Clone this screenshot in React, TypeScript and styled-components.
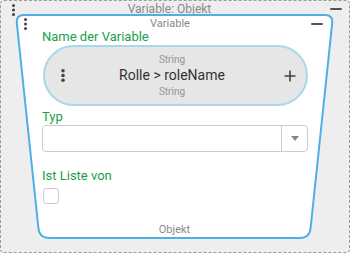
import React from "react";
import styled, { createGlobalStyle } from "styled-components";

const Global = createGlobalStyle`
  html, body { margin: 0; padding: 0; background: #ffffff; }
  body { font-family: Roboto, "Liberation Sans", sans-serif; }
  * { box-sizing: border-box; }
`;

const Outer = styled.div`
  width: 350px;
  height: 253px;
  border: 1px dashed #9c9c9c;
  border-radius: 4px;
  background: #eeeeee;
  display: flex;
  flex-direction: column;
`;

const OuterHeader = styled.div`
  height: 12px;
  display: flex;
  align-items: flex-start;
  padding: 0 7px 0 11px;
`;

const Title = styled.div<{ $size: number; $shift: number }>`
  flex: 1;
  text-align: center;
  font-size: ${(p) => p.$size}px;
  line-height: ${(p) => p.$size + 2}px;
  color: #8a8a8a;
  padding-left: ${(p) => (p.$shift > 0 ? p.$shift : 0)}px;
  padding-right: ${(p) => (p.$shift < 0 ? -p.$shift : 0)}px;
  white-space: nowrap;
`;

const OuterTitle = styled(Title)`
  margin-top: 1px;
`;

const DotsSvg = styled.svg<{ $top: number }>`
  display: block;
  flex: none;
  margin-top: ${(p) => p.$top}px;
`;

const MinusBar = styled.span<{ $top: number }>`
  display: block;
  flex: none;
  width: 12px;
  height: 2px;
  background: #555555;
  border-radius: 1px;
  margin-top: ${(p) => p.$top}px;
`;

const Card = styled.div`
  position: relative;
  margin-left: 13px;
  width: 321px;
  height: 227px;
  display: flex;
  flex-direction: column;
`;

const Shape = styled.svg`
  position: absolute;
  inset: 0;
  z-index: 0;
`;

const CardHeader = styled.div`
  position: relative;
  z-index: 1;
  display: flex;
  align-items: center;
  height: 17px;
  padding: 4px 12px 0 10px;
`;

const Body = styled.div`
  position: relative;
  z-index: 1;
  flex: 1;
  display: flex;
  flex-direction: column;
  padding: 0 0 4px 29px;
  width: 294px;
`;

const Label = styled.div<{ $top: number }>`
  font-size: 13px;
  line-height: 15px;
  color: #1a9d4d;
  margin-top: ${(p) => p.$top}px;
  margin-left: -1px;
`;

const Pill = styled.div`
  margin-top: 1px;
  height: 61px;
  border: 2px solid #a8d8ea;
  border-radius: 31px;
  background: #e6e6e6;
  display: flex;
  align-items: center;
  padding: 0 10px 0 16px;
`;

const PillCenter = styled.div`
  flex: 1;
  display: flex;
  flex-direction: column;
  align-items: center;
  padding-right: 5px;
`;

const TypeText = styled.div`
  font-size: 10px;
  line-height: 12px;
  color: #949494;
`;

const MainText = styled.div`
  font-size: 14px;
  line-height: 17px;
  color: #333333;
  margin: 1px 0 2px;
`;

const PlusSvg = styled.svg`
  display: block;
  flex: none;
`;

const Select = styled.div`
  margin-top: 1px;
  margin-left: -1px;
  height: 27px;
  border: 1px solid #cccccc;
  border-radius: 4px;
  background: #ffffff;
  display: flex;
  justify-content: flex-end;
`;

const SelectToggle = styled.div`
  width: 26px;
  border-left: 1px solid #cccccc;
  display: flex;
  align-items: center;
  justify-content: center;
  padding-left: 1px;
`;

const Arrow = styled.span`
  width: 0;
  height: 0;
  border-left: 4.5px solid transparent;
  border-right: 4.5px solid transparent;
  border-top: 5px solid #888888;
`;

const Checkbox = styled.div`
  margin-top: 5px;
  width: 16px;
  height: 16px;
  border: 1px solid #cccccc;
  border-radius: 3px;
  background: #ffffff;
`;

const Footer = styled.div`
  margin-top: auto;
  margin-left: -29px;
  width: 321px;
  text-align: center;
  font-size: 11px;
  line-height: 13px;
  color: #8a8a8a;
`;

const Dots = ({ w = 3, h = 12, r = 1.5, top = 0 }: { w?: number; h?: number; r?: number; top?: number }) => (
  <DotsSvg width={w} height={h} viewBox={`0 0 ${w} ${h}`} $top={top}>
    <circle cx={w / 2} cy={r} r={r} fill="#444" />
    <circle cx={w / 2} cy={h / 2} r={r} fill="#444" />
    <circle cx={w / 2} cy={h - r} r={r} fill="#444" />
  </DotsSvg>
);

const trapezoid =
  "M10 2 L311 2 Q319 2 318.2 10 L296.6 215 Q295.6 225 285.6 225 L35.4 225 Q25.4 225 24.4 215 L2.8 10 Q2 2 10 2 Z";

export default function App() {
  return (
    <>
      <Global />
      <Outer>
        <OuterHeader>
          <Dots top={3} />
          <OuterTitle $size={12} $shift={-6}>Variable: Objekt</OuterTitle>
          <MinusBar $top={7} />
        </OuterHeader>
        <Card>
          <Shape width={321} height={227} viewBox="0 0 321 227">
            <path d={trapezoid} fill="#ffffff" stroke="#4cb0e6" strokeWidth={2} />
          </Shape>
          <CardHeader>
            <Dots />
            <Title $size={11} $shift={2}>Variable</Title>
            <MinusBar $top={0} />
          </CardHeader>
          <Body>
            <Label $top={-1}>Name der Variable</Label>
            <Pill>
              <Dots w={4} h={13} r={1.8} />
              <PillCenter>
                <TypeText>String</TypeText>
                <MainText>Rolle &gt; roleName</MainText>
                <TypeText>String</TypeText>
              </PillCenter>
              <PlusSvg width={12} height={12} viewBox="0 0 12 12">
                <path d="M6 0.5 V11.5 M0.5 6 H11.5" stroke="#444" strokeWidth={1.6} />
              </PlusSvg>
            </Pill>
            <Label $top={3}>Typ</Label>
            <Select>
              <SelectToggle>
                <Arrow />
              </SelectToggle>
            </Select>
            <Label $top={16}>Ist Liste von</Label>
            <Checkbox />
            <Footer>Objekt</Footer>
          </Body>
        </Card>
      </Outer>
    </>
  );
}
